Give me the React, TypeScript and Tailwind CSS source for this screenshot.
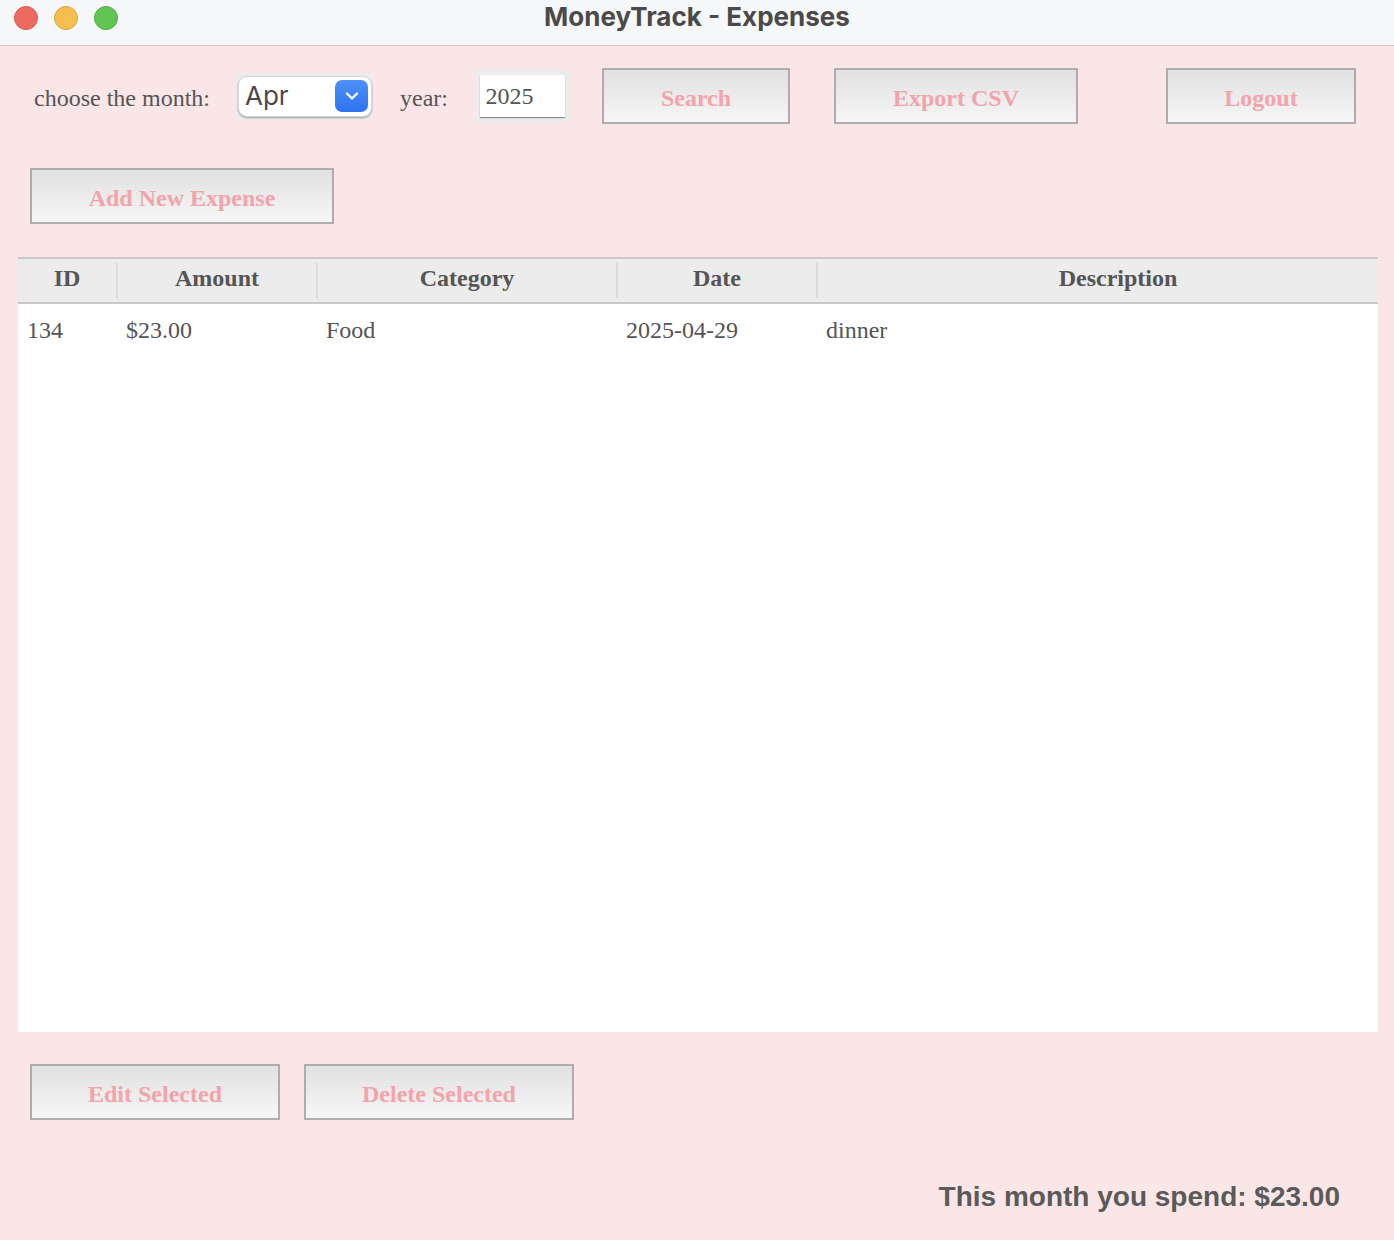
import { ChevronDown } from 'lucide-react';

const serif = "font-['Liberation_Serif',_'Times_New_Roman',_serif]";

interface Expense {
  id: number;
  amount: string;
  category: string;
  date: string;
  description: string;
}

const expenses: Expense[] = [
  { id: 134, amount: '$23.00', category: 'Food', date: '2025-04-29', description: 'dinner' },
];

function PinkButton({ label, className = '' }: { label: string; className?: string }) {
  return (
    <button
      type="button"
      className={`h-[56px] pt-[4px] border-2 border-[#adadad] bg-gradient-to-b from-[#e1e1e1] to-[#f6f6f6] text-[24px] font-bold text-[#f3a4aa] ${serif} ${className}`}
    >
      {label}
    </button>
  );
}

function Divider() {
  return <div className="h-[35px] w-[2px] bg-[#dadada]" />;
}

export default function App() {
  return (
    <div className="w-[1394px] h-[1240px] flex flex-col bg-[#fbe6e7] overflow-hidden">
      {/* title bar */}
      <div className="h-[46px] shrink-0 flex items-start pt-[6px] bg-[#f6f7f9] border-b border-[#dcc5c6] relative">
        <div className="flex gap-[16px] pl-[14px]">
          <span className="w-[24px] h-[24px] rounded-full bg-[#ed6a5e] border border-[#d65a4f]" />
          <span className="w-[24px] h-[24px] rounded-full bg-[#f5bf4f] border border-[#d9a43c]" />
          <span className="w-[24px] h-[24px] rounded-full bg-[#61c554] border border-[#4fad43]" />
        </div>
        <div className="absolute inset-x-0 top-0 h-[33px] flex items-center justify-center font-['Inter',_sans-serif] font-bold text-[26px] text-[#4a4a4a]">
          MoneyTrack - Expenses
        </div>
      </div>

      {/* filter row */}
      <div className={`mt-[22px] h-[56px] flex items-center text-[24px] text-[#555] ${serif}`}>
        <span className="ml-[34px] w-[202px] pt-[4px]">choose the month:</span>
        <div className="w-[138px] h-[47px] bg-[#ececec] flex items-center justify-center">
          <div className="w-[134px] h-[41px] bg-white rounded-[9px] shadow-[0_1px_2px_rgba(0,0,0,0.35)] border border-[#d4d4d4] flex items-center justify-between pl-[6px] pr-[3px]">
            <span className="font-['Inter',_sans-serif] text-[26px] text-[#4a4a4a] leading-none">Apr</span>
            <span className="w-[33px] h-[32px] rounded-[7px] bg-gradient-to-b from-[#4d92f8] to-[#2d72ee] flex items-center justify-center">
              <ChevronDown className="w-[20px] h-[20px] text-white" strokeWidth={2.6} />
            </span>
          </div>
        </div>
        <span className="ml-[26px] w-[74px] pt-[4px]">year:</span>
        <div className="w-[96px] h-[52px] bg-[#ececec] flex items-center justify-center">
          <div className="w-[85px] h-[42px] bg-white shadow-[0_1px_1px_rgba(0,0,0,0.4)] flex items-center pl-[6px]">
            2025
          </div>
        </div>
        <PinkButton label="Search" className="ml-[32px] w-[188px]" />
        <PinkButton label="Export CSV" className="ml-[44px] w-[244px]" />
        <PinkButton label="Logout" className="ml-[88px] w-[190px]" />
      </div>

      <div className="mt-[44px] ml-[30px]">
        <PinkButton label="Add New Expense" className="w-[304px]" />
      </div>

      {/* table */}
      <div className={`mt-[33px] ml-[18px] w-[1360px] h-[775px] bg-white flex flex-col ${serif} text-[24px] text-[#555]`}>
        <div className="h-[47px] flex items-center bg-[#ececec] border-y-2 border-[#c9c9c9] font-bold">
          <div className="w-[98px] text-center pb-[5px]">ID</div>
          <Divider />
          <div className="w-[198px] text-center pb-[5px]">Amount</div>
          <Divider />
          <div className="w-[298px] text-center pb-[5px]">Category</div>
          <Divider />
          <div className="w-[198px] text-center pb-[5px]">Date</div>
          <Divider />
          <div className="flex-1 text-center pl-[40px] pb-[5px]">Description</div>
        </div>
        {expenses.map((e) => (
          <div key={e.id} className="h-[52px] grid grid-cols-[98px_200px_300px_200px_1fr] items-center">
            <span className="pl-[9px]">{e.id}</span>
            <span className="pl-[10px]">{e.amount}</span>
            <span className="pl-[10px]">{e.category}</span>
            <span className="pl-[10px]">{e.date}</span>
            <span className="pl-[10px]">{e.description}</span>
          </div>
        ))}
      </div>

      <div className="mt-[32px] flex">
        <PinkButton label="Edit Selected" className="ml-[30px] w-[250px]" />
        <PinkButton label="Delete Selected" className="ml-[24px] w-[270px]" />
      </div>

      <div className="mt-[61px] flex justify-end pr-[54px] font-['Liberation_Sans',_Arial,_sans-serif] font-bold text-[28px] leading-[32px] text-[#5a5a5a]">
        This month you spend: $23.00
      </div>
    </div>
  );
}
